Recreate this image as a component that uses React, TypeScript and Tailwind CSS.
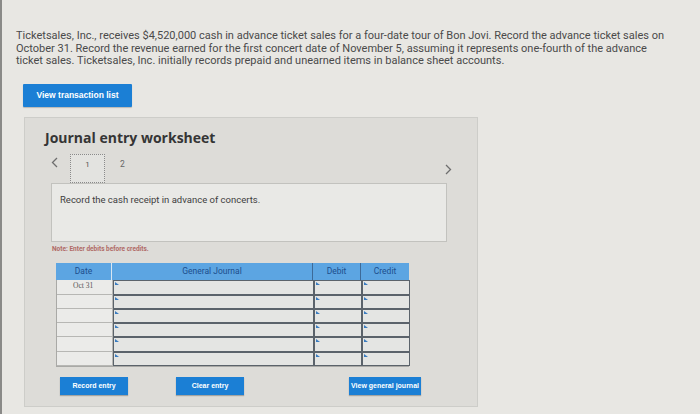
import React from 'react'

const rows = ['Oct 31', '', '', '', '', '']

function InputCell() {
  return (
    <div className="relative h-full border border-[#5b636b] bg-[#e4e5e3]">
      <span className="absolute left-[1px] top-[1px] h-0 w-0 border-l-[4px] border-t-[3px] border-l-[#3a7cc0] border-t-transparent" />
    </div>
  )
}

function BlueButton({ label, width }: { label: string; width: string }) {
  return (
    <button
      className={`block h-[18px] ${width} whitespace-nowrap bg-[#1b7fd5] text-[7px] font-bold leading-[18px] text-white shadow-[0_1px_1px_rgba(0,0,0,0.25)]`}
      style={{ fontFamily: '"Liberation Sans", Arial, sans-serif' }}
    >
      {label}
    </button>
  )
}

function Chevron({ dir }: { dir: 'left' | 'right' }) {
  return (
    <svg width="7" height="11" viewBox="0 0 7 11" fill="none" className="block">
      <polyline
        points={dir === 'left' ? '6,1 1.5,5.5 6,10' : '1,1 5.5,5.5 1,10'}
        stroke="#6e6e6e"
        strokeWidth="1.3"
      />
    </svg>
  )
}

export default function App() {
  return (
    <div
      className="relative h-[414px] w-[700px] overflow-hidden border-l-2 border-l-[#8a8a88] bg-[#e8e7e3] text-[#3f3f3f]"
      style={{ fontFamily: 'Roboto, "Open Sans", sans-serif' }}
    >
      {/* question text */}
      <p className="ml-[14px] pt-[30px] w-[680px] whitespace-nowrap text-[11px] leading-[12.5px] text-[#4a4a4a]">
        Ticketsales, Inc., receives $4,520,000 cash in advance ticket sales for a four-date tour of Bon Jovi. Record the advance ticket sales on
        <br />
        October 31. Record the revenue earned for the first concert date of November 5, assuming it represents one-fourth of the advance
        <br />
        ticket sales. Ticketsales, Inc. initially records prepaid and unearned items in balance sheet accounts.
      </p>

      <div className="ml-[21px] mt-[16px] flex">
        <button
          className="block h-[23px] w-[109px] rounded-[1px] bg-[#1b7fd5] text-[8.5px] font-bold leading-[23px] text-white shadow-[0_1px_1px_rgba(0,0,0,0.2)]"
          style={{ fontFamily: '"Liberation Sans", Arial, sans-serif' }}
        >
          View transaction list
        </button>
      </div>

      {/* worksheet panel */}
      <div className="ml-[22px] mt-[10px] h-[290px] w-[454px] border border-[#cdcdc9] bg-[#dddcd8]">
        <h2
          className="ml-[20px] mt-[11px] text-[14px] font-bold leading-[18px] text-[#353535]"
          style={{ fontFamily: '"Open Sans", sans-serif' }}
        >
          Journal entry worksheet
        </h2>

        <div className="mt-[7px] flex h-[29px] items-start">
          <span className="ml-[26px] mt-[3px]">
            <Chevron dir="left" />
          </span>
          <div className="ml-[12px] flex h-[29px] w-[35px] items-start justify-center border border-dotted border-[#8a8a8a] bg-[#e3e3e0] pt-[4px] text-[8px] text-[#555]">
            1
          </div>
          <span className="ml-[15px] mt-[4px] text-[8.5px] text-[#666]">2</span>
          <span className="ml-auto mr-[25px] mt-[10px]">
            <Chevron dir="right" />
          </span>
        </div>

        <div className="ml-[26px] h-[59px] w-[396px] border border-[#c2c2be] bg-[#e9e9e6] pl-[8px] pt-[9px] text-[9.5px] text-[#404040]">
          Record the cash receipt in advance of concerts.
        </div>

        <p className="ml-[27px] mt-[3px] text-[6.5px] font-bold text-[#b06a66]">Note: Enter debits before credits.</p>

        {/* table */}
        <div className="ml-[31px] mt-[9px] w-[353px] text-[8.5px]">
          <div className="grid h-[17px] grid-cols-[56px_201px_48px_48px] bg-[#5ca5e2] text-[#1d4e8d]">
            <div className="flex items-center justify-center border-r border-[#d8e6f2]">Date</div>
            <div className="flex items-center justify-center border-r border-[#3d6a98]">General Journal</div>
            <div className="flex items-center justify-center border-r border-[#3d6a98]">Debit</div>
            <div className="flex items-center justify-center">Credit</div>
          </div>
          <div className="border-b border-l border-[#a9a9a6]">
            {rows.map((d, i) => (
              <div key={i} className="grid h-[14.3px] grid-cols-[56px_201px_48px_48px]">
                <div
                  className="border-b border-r border-[#b7b7b4] bg-[#ebebe9] pl-[16px] text-[7.5px] leading-[12px] text-[#555]"
                  style={{ fontFamily: '"Liberation Serif", serif' }}
                >
                  {d}
                </div>
                <InputCell />
                <InputCell />
                <InputCell />
              </div>
            ))}
          </div>
        </div>

        {/* action buttons */}
        <div className="mt-[10px] flex items-start">
          <div className="ml-[35px]">
            <BlueButton label="Record entry" width="w-[68px]" />
          </div>
          <div className="ml-[48px]">
            <BlueButton label="Clear entry" width="w-[68px]" />
          </div>
          <div className="ml-[105px]">
            <BlueButton label="View general journal" width="w-[72px]" />
          </div>
        </div>
      </div>
    </div>
  )
}
